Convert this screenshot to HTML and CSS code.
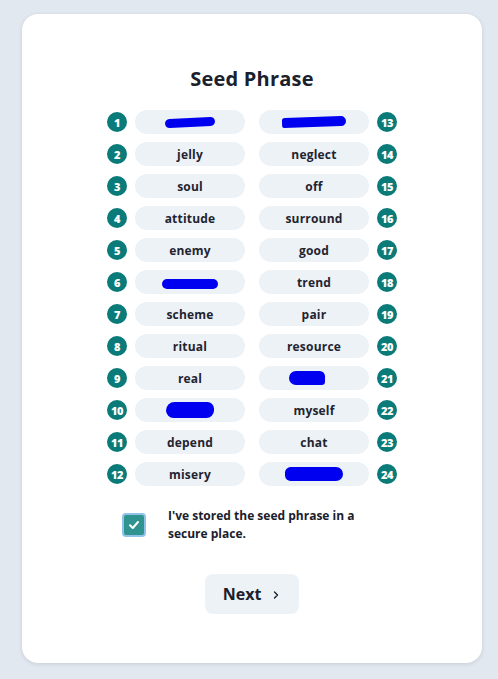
FILE: index.html
```html
<!DOCTYPE html>
<html>
<head>
<meta charset="utf-8">
<link rel="stylesheet" href="styles.css">
</head>
<body>
<div class="card">
  <h1 class="title">Seed Phrase</h1>
  <div class="grid">
    <div class="item left"><span class="num">1</span><span class="pill"><span class="blot b1"></span></span></div>
    <div class="item right"><span class="pill"><span class="blot b13"></span></span><span class="num">13</span></div>
    <div class="item left"><span class="num">2</span><span class="pill">jelly</span></div>
    <div class="item right"><span class="pill">neglect</span><span class="num">14</span></div>
    <div class="item left"><span class="num">3</span><span class="pill">soul</span></div>
    <div class="item right"><span class="pill">off</span><span class="num">15</span></div>
    <div class="item left"><span class="num">4</span><span class="pill">attitude</span></div>
    <div class="item right"><span class="pill">surround</span><span class="num">16</span></div>
    <div class="item left"><span class="num">5</span><span class="pill">enemy</span></div>
    <div class="item right"><span class="pill">good</span><span class="num">17</span></div>
    <div class="item left"><span class="num">6</span><span class="pill"><span class="blot b6"></span></span></div>
    <div class="item right"><span class="pill">trend</span><span class="num">18</span></div>
    <div class="item left"><span class="num">7</span><span class="pill">scheme</span></div>
    <div class="item right"><span class="pill">pair</span><span class="num">19</span></div>
    <div class="item left"><span class="num">8</span><span class="pill">ritual</span></div>
    <div class="item right"><span class="pill">resource</span><span class="num">20</span></div>
    <div class="item left"><span class="num">9</span><span class="pill">real</span></div>
    <div class="item right"><span class="pill"><span class="blot b21"></span></span><span class="num">21</span></div>
    <div class="item left"><span class="num">10</span><span class="pill"><span class="blot b10"></span></span></div>
    <div class="item right"><span class="pill">myself</span><span class="num">22</span></div>
    <div class="item left"><span class="num">11</span><span class="pill">depend</span></div>
    <div class="item right"><span class="pill">chat</span><span class="num">23</span></div>
    <div class="item left"><span class="num">12</span><span class="pill">misery</span></div>
    <div class="item right"><span class="pill"><span class="blot b24"></span></span><span class="num">24</span></div>
  </div>
  <label class="confirm">
    <span class="box"><svg width="14" height="14" viewBox="0 0 14 14"><path d="M3 7.2 L5.8 10 L11 4" fill="none" stroke="#fff" stroke-width="2" stroke-linecap="round" stroke-linejoin="round"/></svg></span>
    <span class="confirm-text">I've stored the seed phrase in a secure place.</span>
  </label>
  <div class="actions">
    <button class="next">Next <svg class="chev" width="10" height="10" viewBox="0 0 10 10"><path d="M3.5 2 L6.5 5 L3.5 8" fill="none" stroke="#1a202c" stroke-width="1.4" stroke-linecap="round" stroke-linejoin="round"/></svg></button>
  </div>
</div>
</body>
</html>
```
FILE: styles.css
```css
html, body {
  margin: 0;
  padding: 0;
}
body {
  background: #e2e8f0;
  font-family: "Open Sans", "Noto Sans", sans-serif;
  color: #1a202c;
  padding: 14px 16px 16px 22px;
}
.card {
  width: 460px;
  height: 649px;
  box-sizing: border-box;
  background: #fff;
  border-radius: 16px;
  box-shadow: 0 1px 4px rgba(0,0,0,0.12);
  padding-top: 51px;
  display: flex;
  flex-direction: column;
  align-items: center;
}
.title {
  margin: 0;
  font-size: 20px;
  font-weight: 700;
  line-height: 28px;
  letter-spacing: 0.2px;
}
.grid {
  margin-top: 17px;
  display: grid;
  grid-template-columns: 138px 138px;
  column-gap: 14px;
  row-gap: 8px;
}
.item {
  display: flex;
  align-items: center;
  gap: 8px;
  height: 24px;
}
.num {
  width: 20px;
  height: 20px;
  border-radius: 50%;
  background: #0a7b78;
  color: #fff;
  font-size: 11px;
  font-weight: 800;
  display: flex;
  align-items: center;
  justify-content: center;
  flex: none;
  letter-spacing: -0.5px;
}
.pill {
  width: 110px;
  height: 24px;
  border-radius: 12px;
  background: #edf2f7;
  display: flex;
  align-items: center;
  justify-content: center;
  font-size: 12px;
  font-weight: 700;
  color: #1f2430;
  flex: none;
  letter-spacing: 0.2px;
}
.blot {
  display: block;
  background: #0000f0;
  border-radius: 10px;
}
.b1 { width: 50px; height: 9px; transform: rotate(-3deg); margin-top: 1px; }
.b13 { width: 64px; height: 10px; border-radius: 6px 10px 10px 4px; transform: rotate(-2deg); }
.b6 { width: 56px; height: 10px; margin-top: 3px; border-radius: 8px; }
.b21 { width: 36px; height: 14px; border-radius: 8px 6px 4px 8px; margin-left: -14px; }
.b10 { width: 48px; height: 16px; border-radius: 9px 7px 8px 8px; }
.b24 { width: 58px; height: 14px; border-radius: 8px 10px 10px 8px; }
.confirm {
  margin-top: 21px;
  width: 260px;
  display: flex;
  align-items: center;
  gap: 22px;
}
.box {
  width: 24px;
  height: 24px;
  box-sizing: border-box;
  border: 2px solid #8fc3e8;
  border-radius: 4px;
  background: #2f9490;
  display: flex;
  align-items: center;
  justify-content: center;
  flex: none;
}
.confirm-text {
  width: 190px;
  font-size: 12px;
  font-weight: 700;
  line-height: 18px;
  color: #1a202c;
}
.actions {
  margin-top: 31px;
}
.next {
  width: 94px;
  height: 40px;
  border: none;
  border-radius: 8px;
  background: #edf2f7;
  font-family: inherit;
  font-size: 16px;
  font-weight: 700;
  color: #1a202c;
  display: flex;
  align-items: center;
  justify-content: center;
  gap: 10px;
  padding: 0;
}
.chev { margin-top: 1px; }
```
